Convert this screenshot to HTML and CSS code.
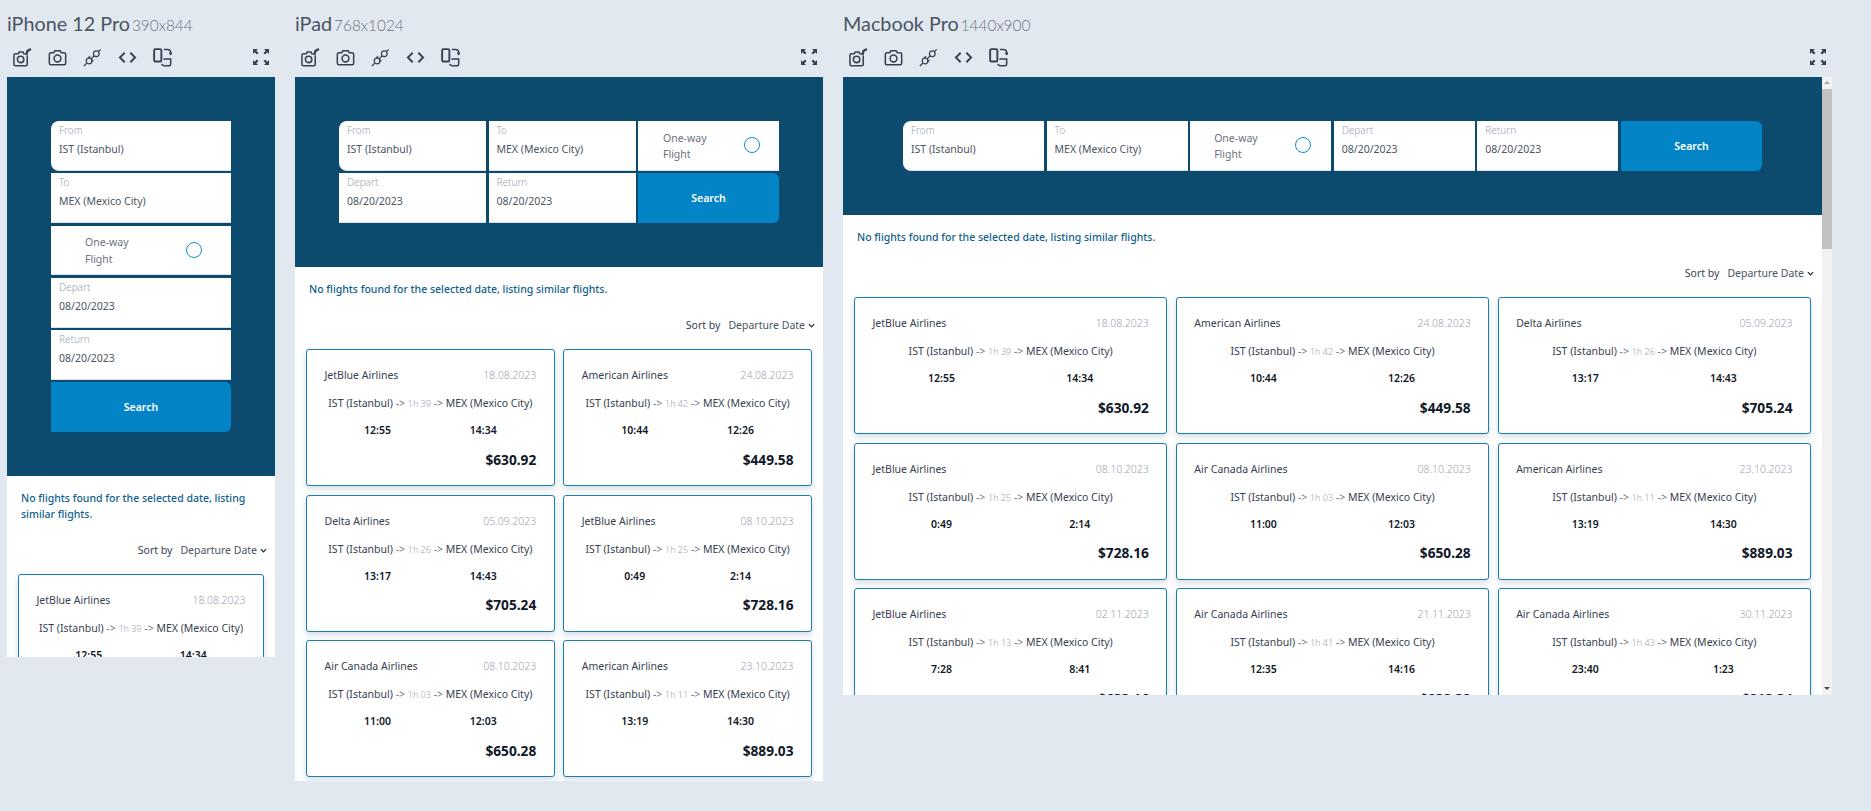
FILE: index.html
```html
<!DOCTYPE html>
<html lang="en">

<head>
    <meta charset="UTF-8">
    <meta name="viewport" content="width=device-width, initial-scale=1.0">
    <title>Responsive preview</title>
    <link rel="stylesheet" href="styles.css">
</head>

<body>
    <svg class="sprite" width="0" height="0">
        <defs>
            <symbol id="i-camera-edit" viewBox="0 0 20 20">
                <path d="M13 6H11.5L10.4 4.2H6.6L5.5 6H2.6A1.6 1.6 0 0 0 1 7.6V17a1.6 1.6 0 0 0 1.6 1.6H13.4A1.6 1.6 0 0 0 15 17V8" />
                <circle cx="8" cy="12" r="3.4" />
                <path d="M14 7.5L15.2 3.2L18.8 1" stroke-width="2.4" />
            </symbol>
            <symbol id="i-camera" viewBox="0 0 20 20">
                <path d="M3 5H6L7.2 3H12.8L14 5H17A1.6 1.6 0 0 1 18.6 6.6V16A1.6 1.6 0 0 1 17 17.6H3A1.6 1.6 0 0 1 1.4 16V6.6A1.6 1.6 0 0 1 3 5Z" />
                <circle cx="10" cy="11" r="3.6" />
            </symbol>
            <symbol id="i-plug" viewBox="0 0 20 20">
                <circle cx="6.4" cy="13.6" r="3" stroke-width="1.3" />
                <circle cx="14" cy="6" r="3" stroke-width="1.3" />
                <path d="M1 19L4.2 15.8M16.2 3.8L18.6 1.4M8.6 11.4L11.8 8.2M9 14.5L11 12.5M5.5 10.5L7.5 8.5" stroke-width="1.3" />
            </symbol>
            <symbol id="i-code" viewBox="0 0 20 20">
                <path d="M7 5L2 10L7 15M13 5L18 10L13 15" stroke-width="2" />
            </symbol>
            <symbol id="i-rotate" viewBox="0 0 20 20">
                <rect x="1.2" y="1.2" width="7.6" height="13" rx="1.4" stroke-width="2" />
                <path d="M11.5 1.5H15.5A3 3 0 0 1 18.5 4.5V6M11 18.6H17A1.6 1.6 0 0 0 18.6 17V11.5H11M11 18.6L9 16.8M17.2 5L18.6 6.6L20 5" />
            </symbol>
            <symbol id="i-expand" viewBox="0 0 16 16">
                <path d="M0 0H5L3.3 1.7L5.5 3.9L3.9 5.5L1.7 3.3L0 5ZM16 0V5L14.3 3.3L12.1 5.5L10.5 3.9L12.7 1.7L11 0ZM0 16V11L1.7 12.7L3.9 10.5L5.5 12.1L3.3 14.3L5 16ZM16 16H11L12.7 14.3L10.5 12.1L12.1 10.5L14.3 12.7L16 11Z" />
            </symbol>
        </defs>
    </svg>

    <main class="devices">
        <!-- iPhone -->
        <section class="device device-phone">
            <h2 class="device-title">iPhone 12 Pro<span class="device-size">390x844</span></h2>
            <div class="toolbar">
                <div class="tools">
                    <svg class="icon"><use href="#i-camera-edit" /></svg>
                    <svg class="icon"><use href="#i-camera" /></svg>
                    <svg class="icon"><use href="#i-plug" /></svg>
                    <svg class="icon"><use href="#i-code" /></svg>
                    <svg class="icon"><use href="#i-rotate" /></svg>
                </div>
                <svg class="icon-expand"><use href="#i-expand" /></svg>
            </div>
            <div class="frame">
                <div class="screen">
                    <header class="hero">
                        <form class="search">
                            <div class="field field-first"><span class="field-label">From</span><span class="field-value">IST (Istanbul)</span></div>
                            <div class="field"><span class="field-label">To</span><span class="field-value">MEX (Mexico City)</span></div>
                            <div class="field oneway"><span class="oneway-text">One-way<br>Flight</span><span class="radio"></span></div>
                            <div class="field"><span class="field-label">Depart</span><span class="field-value">08/20/2023</span></div>
                            <div class="field"><span class="field-label">Return</span><span class="field-value">08/20/2023</span></div>
                            <div class="search-btn">Search</div>
                        </form>
                    </header>
                    <p class="notice">No flights found for the selected date, listing similar flights.</p>
                    <div class="sort"><span>Sort by</span><span class="sort-value">Departure Date</span><svg class="chevron" viewBox="0 0 8 5"><path d="M1 1L4 4L7 1" /></svg></div>
                    <div class="cards">
                        <article class="card">
                            <div class="card-top"><span>JetBlue Airlines</span><span class="card-date">18.08.2023</span></div>
                            <div class="route">IST (Istanbul) <span class="arrow">-&gt;</span> <span class="duration">1h 39</span> <span class="arrow">-&gt;</span> MEX (Mexico City)</div>
                            <div class="times"><span>12:55</span><span>14:34</span></div>
                            <div class="price">$630.92</div>
                        </article>
                    </div>
                </div>
            </div>
        </section>

        <!-- iPad -->
        <section class="device device-tablet">
            <h2 class="device-title">iPad<span class="device-size">768x1024</span></h2>
            <div class="toolbar">
                <div class="tools">
                    <svg class="icon"><use href="#i-camera-edit" /></svg>
                    <svg class="icon"><use href="#i-camera" /></svg>
                    <svg class="icon"><use href="#i-plug" /></svg>
                    <svg class="icon"><use href="#i-code" /></svg>
                    <svg class="icon"><use href="#i-rotate" /></svg>
                </div>
                <svg class="icon-expand"><use href="#i-expand" /></svg>
            </div>
            <div class="frame">
                <div class="screen">
                    <header class="hero">
                        <form class="search">
                            <div class="field field-first"><span class="field-label">From</span><span class="field-value">IST (Istanbul)</span></div>
                            <div class="field"><span class="field-label">To</span><span class="field-value">MEX (Mexico City)</span></div>
                            <div class="field oneway"><span class="oneway-text">One-way<br>Flight</span><span class="radio"></span></div>
                            <div class="field"><span class="field-label">Depart</span><span class="field-value">08/20/2023</span></div>
                            <div class="field"><span class="field-label">Return</span><span class="field-value">08/20/2023</span></div>
                            <div class="search-btn">Search</div>
                        </form>
                    </header>
                    <p class="notice">No flights found for the selected date, listing similar flights.</p>
                    <div class="sort"><span>Sort by</span><span class="sort-value">Departure Date</span><svg class="chevron" viewBox="0 0 8 5"><path d="M1 1L4 4L7 1" /></svg></div>
                    <div class="cards">
                        <article class="card">
                            <div class="card-top"><span>JetBlue Airlines</span><span class="card-date">18.08.2023</span></div>
                            <div class="route">IST (Istanbul) <span class="arrow">-&gt;</span> <span class="duration">1h 39</span> <span class="arrow">-&gt;</span> MEX (Mexico City)</div>
                            <div class="times"><span>12:55</span><span>14:34</span></div>
                            <div class="price">$630.92</div>
                        </article>
                        <article class="card">
                            <div class="card-top"><span>American Airlines</span><span class="card-date">24.08.2023</span></div>
                            <div class="route">IST (Istanbul) <span class="arrow">-&gt;</span> <span class="duration">1h 42</span> <span class="arrow">-&gt;</span> MEX (Mexico City)</div>
                            <div class="times"><span>10:44</span><span>12:26</span></div>
                            <div class="price">$449.58</div>
                        </article>
                        <article class="card">
                            <div class="card-top"><span>Delta Airlines</span><span class="card-date">05.09.2023</span></div>
                            <div class="route">IST (Istanbul) <span class="arrow">-&gt;</span> <span class="duration">1h 26</span> <span class="arrow">-&gt;</span> MEX (Mexico City)</div>
                            <div class="times"><span>13:17</span><span>14:43</span></div>
                            <div class="price">$705.24</div>
                        </article>
                        <article class="card">
                            <div class="card-top"><span>JetBlue Airlines</span><span class="card-date">08.10.2023</span></div>
                            <div class="route">IST (Istanbul) <span class="arrow">-&gt;</span> <span class="duration">1h 25</span> <span class="arrow">-&gt;</span> MEX (Mexico City)</div>
                            <div class="times"><span>0:49</span><span>2:14</span></div>
                            <div class="price">$728.16</div>
                        </article>
                        <article class="card">
                            <div class="card-top"><span>Air Canada Airlines</span><span class="card-date">08.10.2023</span></div>
                            <div class="route">IST (Istanbul) <span class="arrow">-&gt;</span> <span class="duration">1h 03</span> <span class="arrow">-&gt;</span> MEX (Mexico City)</div>
                            <div class="times"><span>11:00</span><span>12:03</span></div>
                            <div class="price">$650.28</div>
                        </article>
                        <article class="card">
                            <div class="card-top"><span>American Airlines</span><span class="card-date">23.10.2023</span></div>
                            <div class="route">IST (Istanbul) <span class="arrow">-&gt;</span> <span class="duration">1h 11</span> <span class="arrow">-&gt;</span> MEX (Mexico City)</div>
                            <div class="times"><span>13:19</span><span>14:30</span></div>
                            <div class="price">$889.03</div>
                        </article>
                    </div>
                </div>
            </div>
        </section>

        <!-- Macbook -->
        <section class="device device-laptop">
            <h2 class="device-title">Macbook Pro<span class="device-size">1440x900</span></h2>
            <div class="toolbar">
                <div class="tools">
                    <svg class="icon"><use href="#i-camera-edit" /></svg>
                    <svg class="icon"><use href="#i-camera" /></svg>
                    <svg class="icon"><use href="#i-plug" /></svg>
                    <svg class="icon"><use href="#i-code" /></svg>
                    <svg class="icon"><use href="#i-rotate" /></svg>
                </div>
                <svg class="icon-expand"><use href="#i-expand" /></svg>
            </div>
            <div class="frame">
                <div class="screen">
                    <header class="hero">
                        <form class="search">
                            <div class="field field-first"><span class="field-label">From</span><span class="field-value">IST (Istanbul)</span></div>
                            <div class="field"><span class="field-label">To</span><span class="field-value">MEX (Mexico City)</span></div>
                            <div class="field oneway"><span class="oneway-text">One-way<br>Flight</span><span class="radio"></span></div>
                            <div class="field"><span class="field-label">Depart</span><span class="field-value">08/20/2023</span></div>
                            <div class="field"><span class="field-label">Return</span><span class="field-value">08/20/2023</span></div>
                            <div class="search-btn">Search</div>
                        </form>
                    </header>
                    <p class="notice">No flights found for the selected date, listing similar flights.</p>
                    <div class="sort"><span>Sort by</span><span class="sort-value">Departure Date</span><svg class="chevron" viewBox="0 0 8 5"><path d="M1 1L4 4L7 1" /></svg></div>
                    <div class="cards">
                        <article class="card">
                            <div class="card-top"><span>JetBlue Airlines</span><span class="card-date">18.08.2023</span></div>
                            <div class="route">IST (Istanbul) <span class="arrow">-&gt;</span> <span class="duration">1h 39</span> <span class="arrow">-&gt;</span> MEX (Mexico City)</div>
                            <div class="times"><span>12:55</span><span>14:34</span></div>
                            <div class="price">$630.92</div>
                        </article>
                        <article class="card">
                            <div class="card-top"><span>American Airlines</span><span class="card-date">24.08.2023</span></div>
                            <div class="route">IST (Istanbul) <span class="arrow">-&gt;</span> <span class="duration">1h 42</span> <span class="arrow">-&gt;</span> MEX (Mexico City)</div>
                            <div class="times"><span>10:44</span><span>12:26</span></div>
                            <div class="price">$449.58</div>
                        </article>
                        <article class="card">
                            <div class="card-top"><span>Delta Airlines</span><span class="card-date">05.09.2023</span></div>
                            <div class="route">IST (Istanbul) <span class="arrow">-&gt;</span> <span class="duration">1h 26</span> <span class="arrow">-&gt;</span> MEX (Mexico City)</div>
                            <div class="times"><span>13:17</span><span>14:43</span></div>
                            <div class="price">$705.24</div>
                        </article>
                        <article class="card">
                            <div class="card-top"><span>JetBlue Airlines</span><span class="card-date">08.10.2023</span></div>
                            <div class="route">IST (Istanbul) <span class="arrow">-&gt;</span> <span class="duration">1h 25</span> <span class="arrow">-&gt;</span> MEX (Mexico City)</div>
                            <div class="times"><span>0:49</span><span>2:14</span></div>
                            <div class="price">$728.16</div>
                        </article>
                        <article class="card">
                            <div class="card-top"><span>Air Canada Airlines</span><span class="card-date">08.10.2023</span></div>
                            <div class="route">IST (Istanbul) <span class="arrow">-&gt;</span> <span class="duration">1h 03</span> <span class="arrow">-&gt;</span> MEX (Mexico City)</div>
                            <div class="times"><span>11:00</span><span>12:03</span></div>
                            <div class="price">$650.28</div>
                        </article>
                        <article class="card">
                            <div class="card-top"><span>American Airlines</span><span class="card-date">23.10.2023</span></div>
                            <div class="route">IST (Istanbul) <span class="arrow">-&gt;</span> <span class="duration">1h 11</span> <span class="arrow">-&gt;</span> MEX (Mexico City)</div>
                            <div class="times"><span>13:19</span><span>14:30</span></div>
                            <div class="price">$889.03</div>
                        </article>
                        <article class="card">
                            <div class="card-top"><span>JetBlue Airlines</span><span class="card-date">02.11.2023</span></div>
                            <div class="route">IST (Istanbul) <span class="arrow">-&gt;</span> <span class="duration">1h 13</span> <span class="arrow">-&gt;</span> MEX (Mexico City)</div>
                            <div class="times"><span>7:28</span><span>8:41</span></div>
                            <div class="price">$633.16</div>
                        </article>
                        <article class="card">
                            <div class="card-top"><span>Air Canada Airlines</span><span class="card-date">21.11.2023</span></div>
                            <div class="route">IST (Istanbul) <span class="arrow">-&gt;</span> <span class="duration">1h 41</span> <span class="arrow">-&gt;</span> MEX (Mexico City)</div>
                            <div class="times"><span>12:35</span><span>14:16</span></div>
                            <div class="price">$838.38</div>
                        </article>
                        <article class="card">
                            <div class="card-top"><span>Air Canada Airlines</span><span class="card-date">30.11.2023</span></div>
                            <div class="route">IST (Istanbul) <span class="arrow">-&gt;</span> <span class="duration">1h 43</span> <span class="arrow">-&gt;</span> MEX (Mexico City)</div>
                            <div class="times"><span>23:40</span><span>1:23</span></div>
                            <div class="price">$813.34</div>
                        </article>
                    </div>
                </div>
                <div class="scrollbar">
                    <span class="scroll-up"></span>
                    <span class="scroll-thumb"></span>
                    <span class="scroll-down"></span>
                </div>
            </div>
        </section>
    </main>
</body>

</html>
```

FILE: styles.css
```css
* {
    box-sizing: border-box;
}

body {
    margin: 0;
    height: 811px;
    overflow: hidden;
    background: #e2e8f0;
    font-family: 'Noto Sans', sans-serif;
    font-size: 10.5px;
    color: #374151;
}

.sprite {
    display: block;
}

.devices {
    display: flex;
    align-items: flex-start;
    gap: 20px;
    padding-left: 7px;
}

.device {
    flex: none;
}

.device-phone {
    width: 268px;
}

.device-tablet {
    width: 528px;
}

.device-laptop {
    width: 989px;
}

.device-title {
    margin: 0;
    padding-top: 10px;
    height: 43px;
    font-family: 'Lato', sans-serif;
    font-size: 19.8px;
    line-height: 26px;
    font-weight: 400;
    color: #4b5563;
    white-space: nowrap;
}

.device-size {
    margin-left: 2px;
    font-size: 15.4px;
    font-weight: 300;
    color: #6b7280;
}

.toolbar {
    display: flex;
    justify-content: space-between;
    align-items: center;
    height: 34px;
    padding: 2px 7px 8px 6px;
}

.tools {
    display: flex;
    gap: 16px;
}

.icon {
    width: 19px;
    height: 19px;
    fill: none;
    stroke: #374151;
    stroke-width: 1.6;
}

.icon-expand {
    width: 16px;
    height: 16px;
    margin-right: -1px;
    fill: #374151;
}

.frame {
    display: flex;
    background: #fff;
    overflow: hidden;
}

.device-phone .frame {
    height: 580px;
}

.device-tablet .frame {
    height: 704px;
}

.device-laptop .frame {
    height: 618px;
}

.screen {
    flex: 1;
    min-width: 0;
}

.hero {
    background: #0c4a6e;
    padding: 44px 0 44px;
}

.search {
    display: grid;
    gap: 2.5px;
}

.device-phone .search {
    width: 180px;
    margin-left: 44px;
}

.device-tablet .search {
    width: 440px;
    margin-left: 44px;
    grid-template-columns: 147px 147px 141px;
}

.device-laptop .search {
    width: 859px;
    margin-left: 60px;
    grid-template-columns: repeat(6, 1fr);
}

.field {
    display: flex;
    flex-direction: column;
    height: 49.75px;
    padding-left: 8px;
    background: #fff;
    border-bottom: 1px solid #d7e3ec;
}

.field-first {
    border-radius: 8px 0 0 8px;
}

.field-label {
    font-size: 10px;
    font-weight: 300;
    line-height: 12px;
    margin-top: 3px;
    color: #9ca3af;
}

.field-value {
    margin-top: 6px;
    line-height: 14px;
    color: #4b5563;
}

.oneway {
    flex-direction: row;
    align-items: center;
    justify-content: space-between;
    padding: 0 29px 0 34px;
}

.device-tablet .oneway {
    padding: 0 19px 0 25px;
}

.device-laptop .oneway {
    padding: 0 20px 0 24px;
}

.oneway-text {
    padding-top: 2px;
    line-height: 16.5px;
    color: #6b7280;
}

.radio {
    width: 16px;
    height: 16px;
    border: 1.5px solid #0e8fc6;
    border-radius: 50%;
    background: #fff;
}

.search-btn {
    display: flex;
    justify-content: center;
    align-items: center;
    height: 50px;
    padding-bottom: 1px;
    background: #0284c7;
    color: #fff;
    font-weight: 600;
    border-radius: 0 6px 6px 0;
}

.notice {
    margin: 0;
    padding: 14px 11px 0 14px;
    line-height: 16px;
    font-weight: 500;
    color: #0f5f8c;
}

.sort {
    display: flex;
    justify-content: flex-end;
    align-items: center;
    gap: 8px;
    height: 20px;
    margin-top: 18px;
    padding-right: 8px;
}

.sort-value {
    margin-right: -5px;
    color: #4b5563;
}

.chevron {
    width: 7px;
    height: 5px;
    fill: none;
    stroke: #1f2937;
    stroke-width: 1.4;
}

.cards {
    display: grid;
    gap: 8.5px;
    padding: 14px 11px 0;
}

.device-tablet .cards {
    grid-template-columns: 1fr 1fr;
}

.device-laptop .cards {
    grid-template-columns: 1fr 1fr 1fr;
}

.card {
    height: 137px;
    padding: 16px 17.5px 0;
    background: #fff;
    border: 1px solid #1b7cb0;
    border-radius: 3px;
    box-shadow: 0 3px 6px rgba(12, 74, 110, 0.18);
}

.card-top {
    display: flex;
    justify-content: space-between;
    line-height: 18px;
}

.card-date {
    font-weight: 300;
    color: #9ca3af;
}

.route {
    margin-top: 10px;
    line-height: 18px;
    text-align: center;
    white-space: nowrap;
}

.arrow {
    color: #6b7280;
}

.duration {
    font-size: 9px;
    font-weight: 300;
    color: #9ca3af;
}

.times {
    display: grid;
    grid-template-columns: 1fr 1fr;
    margin-top: 8px;
    line-height: 18px;
    text-align: center;
    font-weight: 600;
    color: #111827;
}

.price {
    margin-top: 10.5px;
    line-height: 20px;
    text-align: right;
    font-size: 13.7px;
    font-weight: 700;
    color: #111827;
}

.scrollbar {
    display: flex;
    flex-direction: column;
    width: 10px;
    background: #f1f1f1;
}

.scroll-up,
.scroll-down {
    height: 12px;
    position: relative;
}

.scroll-up::after,
.scroll-down::after {
    content: '';
    position: absolute;
    left: 2px;
    top: 4px;
    border-left: 3px solid transparent;
    border-right: 3px solid transparent;
}

.scroll-up::after {
    border-bottom: 3px solid #a8a8a8;
}

.scroll-down::after {
    border-top: 3px solid #505050;
}

.scroll-thumb {
    height: 160px;
    margin-bottom: auto;
    background: #c1c1c1;
}
```
